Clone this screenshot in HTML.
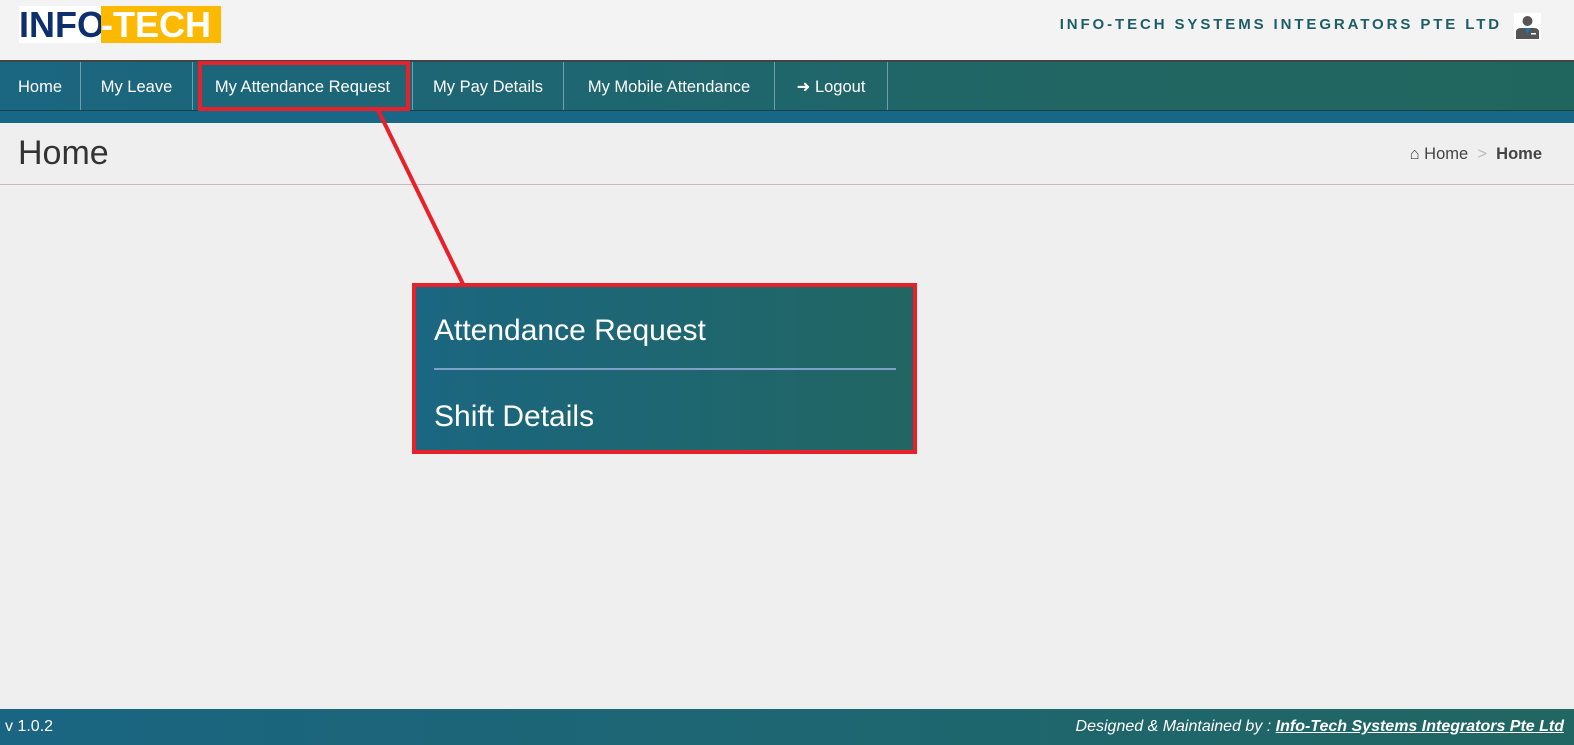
<!DOCTYPE html>
<html><head><style>
*{margin:0;padding:0;box-sizing:border-box}
body{width:1574px;height:745px;background:#efefef;font-family:"Liberation Sans","DejaVu Sans",sans-serif;position:relative;overflow:hidden}
.top{position:absolute;left:0;top:0;width:1574px;height:60px;background:#f3f3f3}
.logo{position:absolute;left:19px;top:6px;height:37px;width:202px;display:flex;font-weight:bold;font-size:36px;line-height:38px;letter-spacing:0px}
.logo .a{background:#fff;color:#0d2f6e;width:82px;overflow:hidden}
.logo .b{background:#fcb900;color:#fff;flex:1;overflow:hidden;white-space:nowrap}
.co{position:absolute;right:72px;top:16px;font-size:15px;letter-spacing:2.9px;color:#1d5e66;font-weight:bold}
.av{position:absolute;left:1514px;top:13px;width:27px;height:27px;background:#fff}
.nav{position:absolute;left:0;top:60px;width:1574px;height:51px;border-top:2px solid #444;border-bottom:1px solid #1c4148;background:linear-gradient(90deg,#1b6681,#216662 70%,#21665e)}
.nav div{position:absolute;top:0;height:48px;line-height:50px;color:#fff;font-size:16.5px;border-right:1px solid #6ba0ae;text-align:center}
.strip{position:absolute;left:0;top:111px;width:1574px;height:12px;background:#196786}
.ph{position:absolute;left:0;top:123px;width:1574px;height:62px;border-bottom:1px solid #c8b8b8}
.ph h1{position:absolute;left:18px;top:11px;font-weight:normal;font-size:34px;color:#333}
.bc{position:absolute;right:32px;top:22px;font-size:16.5px;color:#444}
.foot{position:absolute;left:0;top:709px;width:1574px;height:36px;background:linear-gradient(90deg,#1a6582,#216662);color:#fff;font-size:16px;line-height:36px}
.dd{position:absolute;left:412px;top:283px;width:505px;height:171px;border:4px solid #e8202a;background:linear-gradient(90deg,#1b6681,#216662)}
.dd p{position:absolute;left:18px;color:#fff;font-size:30px}
.red{position:absolute;border:4px solid #e8202a}
</style></head><body>
<div class="top">
<div class="logo"><span class="a">INFO</span><span class="b">-TECH</span></div>
<div class="co">INFO-TECH SYSTEMS INTEGRATORS PTE LTD</div>
<div class="av"><svg width="27" height="27" viewBox="0 0 27 27"><circle cx="13.5" cy="8" r="5" fill="#555"/><path d="M2 26 V19 Q2 15 7 15 H20 Q25 15 25 19 V26Z" fill="#555"/><path d="M11 15 L13.5 22 L16 15Z" fill="#1c73b8"/><rect x="17" y="20" width="5" height="1.5" fill="#fff"/></svg></div>
</div>
<div class="nav">
<div style="left:0;width:81px">Home</div>
<div style="left:81px;width:112px">My Leave</div>
<div style="left:193px;width:220px">My Attendance Request</div>
<div style="left:413px;width:151px">My Pay Details</div>
<div style="left:564px;width:211px">My Mobile Attendance</div>
<div style="left:775px;width:113px">&#10140; Logout</div>
</div>
<div class="strip"></div>
<div class="red" style="left:198px;top:61px;width:212px;height:50px"></div>
<div class="ph"><h1>Home</h1><div class="bc">&#8962; Home &nbsp;<span style="color:#bbb">&gt;</span>&nbsp; <b>Home</b></div></div>
<svg style="position:absolute;left:0;top:0" width="1574" height="745"><line x1="378" y1="110" x2="463" y2="284" stroke="#e8202a" stroke-width="4"/></svg>
<div class="dd">
<p style="top:27px">Attendance Request</p>
<div style="position:absolute;left:18px;top:81px;width:462px;height:2px;background:#7d9fc8"></div>
<p style="top:113px">Shift Details</p>
</div>
<div class="foot"><span style="position:absolute;left:5px">v 1.0.2</span><span style="position:absolute;right:10px;font-style:italic">Designed &amp; Maintained by : <b style="text-decoration:underline">Info-Tech Systems Integrators Pte Ltd</b></span></div>
</body></html>
